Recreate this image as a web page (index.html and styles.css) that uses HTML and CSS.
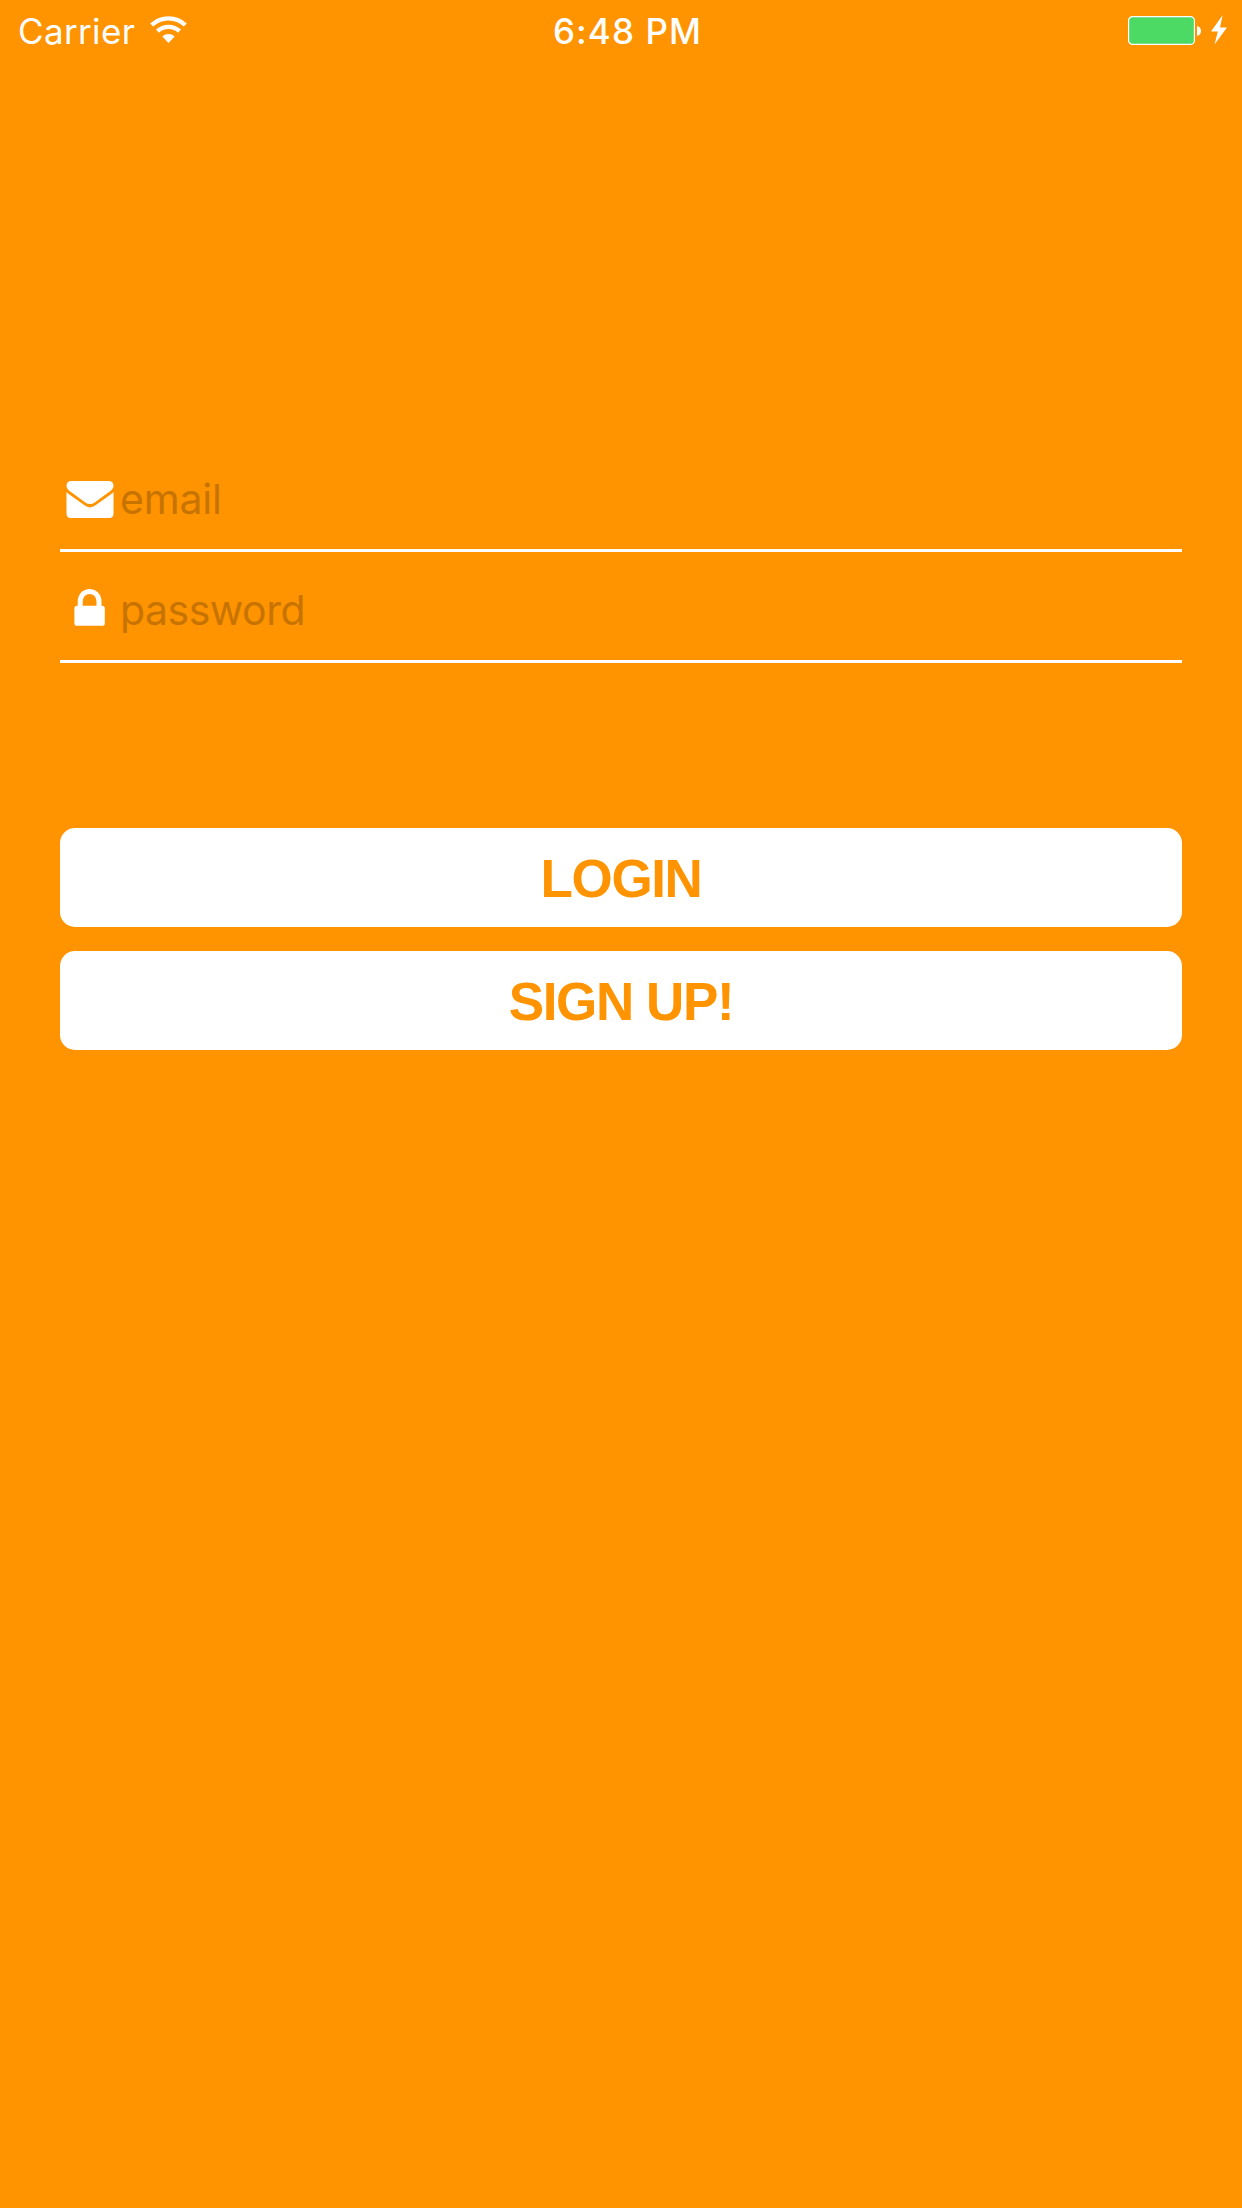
FILE: index.html
```html
<!DOCTYPE html>
<html lang="en">
<head>
<meta charset="utf-8">
<title>Login</title>
<link rel="stylesheet" href="styles.css">
</head>
<body>
<header class="status-bar">
  <div class="status-left">
    <span class="carrier">Carrier</span>
    <svg class="wifi" width="38" height="28" viewBox="0 0 38 28" aria-hidden="true">
      <g fill="none" stroke="#fff" stroke-width="4.4">
        <path d="M1.7 9A24.5 24.5 0 0 1 35.3 9"/>
        <path d="M7.5 15.2A16.2 16.2 0 0 1 29.5 15.2"/>
      </g>
      <path fill="#fff" d="M12.3 20.5A9 9 0 0 1 24.7 20.5L18.5 27Z"/>
    </svg>
  </div>
  <span class="clock">6:48 PM</span>
  <div class="status-right">
    <svg class="battery" width="100" height="32" viewBox="0 0 100 32" aria-hidden="true">
      <rect x=".6" y="1.6" width="65.8" height="27.8" rx="4" fill="#4cd964" stroke="#fff" stroke-width="1.2"/>
      <path fill="#fff" d="M69 11Q73 12 73 16T69 21Z"/>
      <path fill="#fff" d="M94.7 0L83 16.6H89.8L86.5 29.6L99 12.4H92Z"/>
    </svg>
  </div>
</header>
<main class="login">
  <div class="field">
    <svg class="icon" width="60" height="48" viewBox="0 0 60 48" aria-hidden="true">
      <path fill="#fff" d="M11.5 5H48.5Q53.5 5 53.5 9.7C53.5 12.4 51.5 14.2 49 16L35 26.2Q30 30 25 26.2L11 16C8.5 14.2 6.5 12.4 6.5 9.7Q6.5 5 11.5 5ZM6.5 15.9Q7.6 17.2 9 18.2L24.5 29.3Q30 33.5 35.5 29.3L51 18.2Q52.4 17.2 53.5 15.9V37.5Q53.5 42 49 42H11Q6.5 42 6.5 37.5Z"/>
    </svg>
    <span class="placeholder email">email</span>
  </div>
  <div class="field">
    <svg class="icon" width="60" height="48" viewBox="0 0 60 48" aria-hidden="true">
      <path fill="none" stroke="#fff" stroke-width="5" d="M20.2 22V14.2A9.4 9.8 0 0 1 39 14.2V22"/>
      <rect x="14.4" y="18.8" width="30.4" height="20" rx="2.6" fill="#fff"/>
    </svg>
    <span class="placeholder password">password</span>
  </div>
  <div class="actions">
    <button class="button" type="button">LOGIN</button>
    <button class="button signup" type="button">SIGN UP!</button>
  </div>
</main>
</body>
</html>
```
FILE: styles.css
```css
* { box-sizing: border-box; }

body {
  margin: 0;
  min-height: 2208px;
  background: #ff9300;
  color: #fff;
  font-family: Inter, "Liberation Sans", sans-serif;
}

.status-bar {
  display: grid;
  grid-template-columns: 1fr auto 1fr;
  height: 60px;
  padding: 0 14px 0 18px;
  font-size: 35px;
  line-height: 62px;
}

.status-left, .status-right { display: flex; }
.status-left { gap: 16px; }
.status-right { justify-content: flex-end; }
.carrier { width: 116px; white-space: nowrap; font-weight: 400; letter-spacing: .35px; }
.wifi { margin-top: 16px; }
.clock { padding-left: 9px; font-weight: 500; letter-spacing: 1.1px; }
.battery { margin-top: 15px; }

.login { padding: 381px 60px 0; }

.field {
  display: flex;
  align-items: flex-start;
  height: 111px;
  padding-top: 35px;
  border-bottom: 3px solid #fff;
}

.icon { flex: none; }

.placeholder {
  margin-top: -1px;
  color: #c77300;
  font-size: 41px;
  line-height: 48px;
}

.email { letter-spacing: -.2px; }
.password { letter-spacing: -.5px; }

.actions {
  display: flex;
  flex-direction: column;
  gap: 24px;
  margin-top: 165px;
}

.button {
  height: 99px;
  padding: 2px 0 0;
  border: 0;
  border-radius: 15px;
  background: #fff;
  color: #ff9300;
  font: bold 53px/60px "Liberation Sans", Arial, sans-serif;
  letter-spacing: -1.4px;
}
```
